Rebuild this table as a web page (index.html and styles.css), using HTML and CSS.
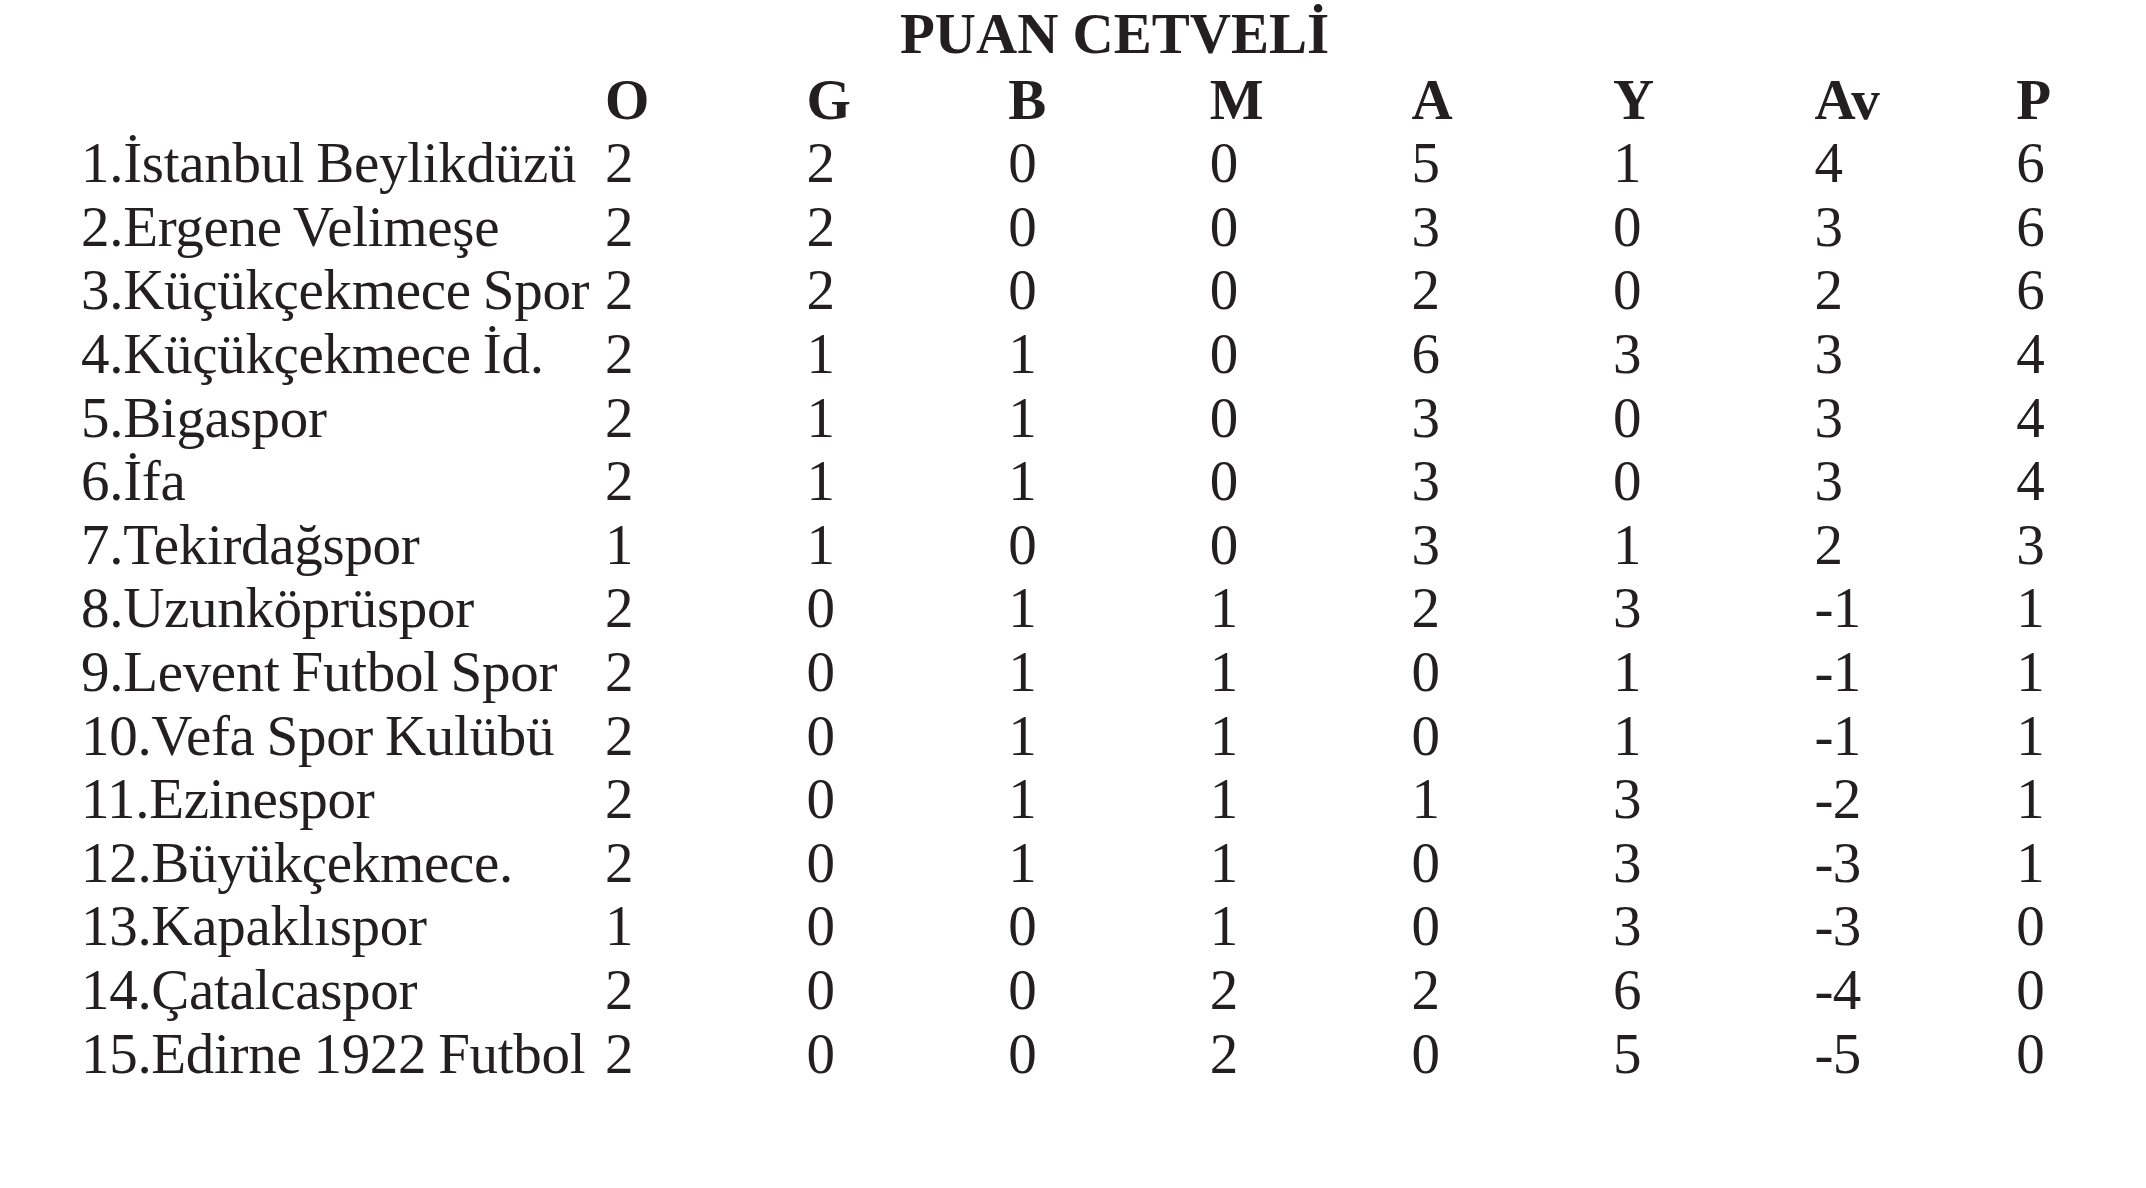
FILE: index.html
```html
<!DOCTYPE html>
<html lang="tr">
<head>
<meta charset="utf-8">
<title>Puan Cetveli</title>
<link rel="stylesheet" href="styles.css">
</head>
<body>
<div class="sheet">
  <h1 class="title">PUAN CETVELİ</h1>
  <div class="table">
    <div class="head"></div><div class="head">O</div><div class="head">G</div><div class="head">B</div><div class="head">M</div><div class="head">A</div><div class="head">Y</div><div class="head">Av</div><div class="head">P</div>

    <div class="name">1.İstanbul Beylikdüzü</div><div>2</div><div>2</div><div>0</div><div>0</div><div>5</div><div>1</div><div>4</div><div>6</div>
    <div class="name">2.Ergene Velimeşe</div><div>2</div><div>2</div><div>0</div><div>0</div><div>3</div><div>0</div><div>3</div><div>6</div>
    <div class="name">3.Küçükçekmece Spor</div><div>2</div><div>2</div><div>0</div><div>0</div><div>2</div><div>0</div><div>2</div><div>6</div>
    <div class="name">4.Küçükçekmece İd.</div><div>2</div><div>1</div><div>1</div><div>0</div><div>6</div><div>3</div><div>3</div><div>4</div>
    <div class="name">5.Bigaspor</div><div>2</div><div>1</div><div>1</div><div>0</div><div>3</div><div>0</div><div>3</div><div>4</div>
    <div class="name">6.İfa</div><div>2</div><div>1</div><div>1</div><div>0</div><div>3</div><div>0</div><div>3</div><div>4</div>
    <div class="name">7.Tekirdağspor</div><div>1</div><div>1</div><div>0</div><div>0</div><div>3</div><div>1</div><div>2</div><div>3</div>
    <div class="name">8.Uzunköprüspor</div><div>2</div><div>0</div><div>1</div><div>1</div><div>2</div><div>3</div><div>-1</div><div>1</div>
    <div class="name">9.Levent Futbol Spor</div><div>2</div><div>0</div><div>1</div><div>1</div><div>0</div><div>1</div><div>-1</div><div>1</div>
    <div class="name">10.Vefa Spor Kulübü</div><div>2</div><div>0</div><div>1</div><div>1</div><div>0</div><div>1</div><div>-1</div><div>1</div>
    <div class="name">11.Ezinespor</div><div>2</div><div>0</div><div>1</div><div>1</div><div>1</div><div>3</div><div>-2</div><div>1</div>
    <div class="name">12.Büyükçekmece.</div><div>2</div><div>0</div><div>1</div><div>1</div><div>0</div><div>3</div><div>-3</div><div>1</div>
    <div class="name">13.Kapaklıspor</div><div>1</div><div>0</div><div>0</div><div>1</div><div>0</div><div>3</div><div>-3</div><div>0</div>
    <div class="name">14.Çatalcaspor</div><div>2</div><div>0</div><div>0</div><div>2</div><div>2</div><div>6</div><div>-4</div><div>0</div>
    <div class="name">15.Edirne 1922 Futbol</div><div>2</div><div>0</div><div>0</div><div>2</div><div>0</div><div>5</div><div>-5</div><div>0</div>
  </div>
</div>
</body>
</html>
```

FILE: styles.css
```css
html, body {
  margin: 0;
  padding: 0;
  background: #ffffff;
}

body {
  font-family: "Liberation Serif", "Times New Roman", serif;
  color: #231f20;
  font-size: 57px;
  line-height: 63.6px;
}

.sheet {
  padding: 2px 0 0 81px;
}

.title {
  margin: 0 0 2px 0;
  padding-left: 819px;
  font-size: 57px;
  line-height: 63.6px;
  font-weight: bold;
  letter-spacing: 0;
  white-space: nowrap;
}

.table {
  display: grid;
  grid-template-columns: 524px repeat(7, 201.6px) auto;
  white-space: nowrap;
  letter-spacing: -0.8px;
}

.head {
  font-weight: bold;
  letter-spacing: -0.3px;
}

.name {
  letter-spacing: -0.3px;
  word-spacing: -2px;
}
```
